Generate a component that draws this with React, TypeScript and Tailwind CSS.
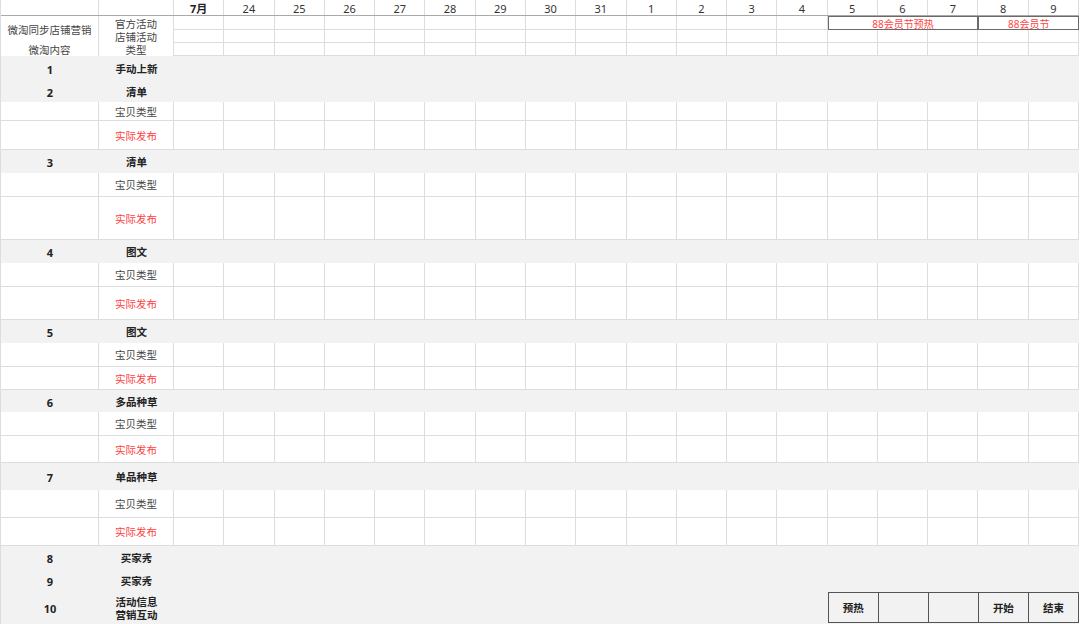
import React from 'react';

const dates = ['7月', '24', '25', '26', '27', '28', '29', '30', '31', '1', '2', '3', '4', '5', '6', '7', '8', '9'];

type Row = { kind: 'gray' | 'white'; h: string; num?: string; label?: string; red?: boolean };

const rows: Row[] = [
  { kind: 'gray', h: 'h-[24px]', num: '1', label: '手动上新' },
  { kind: 'gray', h: 'h-[22px]', num: '2', label: '清单' },
  { kind: 'white', h: 'h-[19px]', label: '宝贝类型' },
  { kind: 'white', h: 'h-[29px]', label: '实际发布', red: true },
  { kind: 'gray', h: 'h-[23px]', num: '3', label: '清单' },
  { kind: 'white', h: 'h-[24px]', label: '宝贝类型' },
  { kind: 'white', h: 'h-[43px]', label: '实际发布', red: true },
  { kind: 'gray', h: 'h-[23px]', num: '4', label: '图文' },
  { kind: 'white', h: 'h-[24px]', label: '宝贝类型' },
  { kind: 'white', h: 'h-[33px]', label: '实际发布', red: true },
  { kind: 'gray', h: 'h-[23px]', num: '5', label: '图文' },
  { kind: 'white', h: 'h-[24px]', label: '宝贝类型' },
  { kind: 'white', h: 'h-[23px]', label: '实际发布', red: true },
  { kind: 'gray', h: 'h-[22px]', num: '6', label: '多品种草' },
  { kind: 'white', h: 'h-[24px]', label: '宝贝类型' },
  { kind: 'white', h: 'h-[27px]', label: '实际发布', red: true },
  { kind: 'gray', h: 'h-[27px]', num: '7', label: '单品种草' },
  { kind: 'white', h: 'h-[28px]', label: '宝贝类型' },
  { kind: 'white', h: 'h-[28px]', label: '实际发布', red: true },
  { kind: 'gray', h: 'h-[23px]', num: '8', label: '买家秀' },
  { kind: 'gray', h: 'h-[23px]', num: '9', label: '买家秀' },
];

const cols = 'grid grid-cols-[98px_75px_repeat(18,minmax(0,1fr))]';
const line = 'border-[#dddddd]';
const center = 'flex items-center justify-center';

function EmptyCells({ count }: { count: number }) {
  return (
    <>
      {Array.from({ length: count }).map((_, i) => (
        <div key={i} className={`border-r border-b ${line}`} />
      ))}
    </>
  );
}

export default function App() {
  return (
    <div className="w-[1080px] h-[624px] bg-white overflow-hidden font-['Noto_Sans','Noto_Sans_CJK_SC',sans-serif] text-[#333] leading-none">
      <div className={`w-[1079px] border-l ${line}`}>
        {/* date header */}
        <div className={`${cols} h-[16px] border-b border-[#a9a9a9]`}>
          <div className={`border-r ${line}`} />
          <div className={`border-r ${line}`} />
          {dates.map((d, i) => (
            <div
              key={d + i}
              className={`border-r ${line} ${center} pt-px text-[11px] ${i === 0 ? 'font-bold text-[#222]' : 'text-[#333]'}`}
            >
              {d}
            </div>
          ))}
        </div>

        {/* activities */}
        <div className={`${cols} grid-rows-[14px_13px]`}>
          <div className={`row-span-2 border-r ${line} ${center} pt-px text-[10.5px] text-[#444]`}>微淘同步店铺营销</div>
          <div className={`border-r ${line} ${center} text-[10.5px] text-[#444] pt-[3px]`}>官方活动</div>
          <EmptyCells count={13} />
          <div className={`col-span-3 border border-[#6a6a6a] ${center} pt-px text-[10px] text-[#ff4545]`}>88会员节预热</div>
          <div className={`col-span-2 border border-[#6a6a6a] ${center} pt-px text-[10px] text-[#ff4545]`}>88会员节</div>
          <div className={`border-r ${line} ${center} pt-px text-[10.5px] text-[#444]`}>店铺活动</div>
          <EmptyCells count={18} />
        </div>

        <div className={`${cols} h-[13px]`}>
          <div className={`border-r ${line} ${center} pt-px text-[10.5px] text-[#444]`}>微淘内容</div>
          <div className={`border-r ${line} ${center} pt-px text-[10.5px] text-[#444]`}>类型</div>
          <EmptyCells count={18} />
        </div>

        {/* content rows */}
        {rows.map((r, i) =>
          r.kind === 'gray' ? (
            <div key={i} className={`${cols} ${r.h} bg-[#f2f2f2]`}>
              <div className={`${center} pt-[2px] text-[11px] font-bold text-[#222]`}>{r.num}</div>
              <div className={`${center} pt-[2px] text-[10.5px] font-bold text-[#222]`}>{r.label}</div>
              <div className="col-span-18" />
            </div>
          ) : (
            <div key={i} className={`${cols} ${r.h}`}>
              <div className={`border-r border-b ${line}`} />
              <div
                className={`border-r border-b ${line} ${center} pt-[2px] text-[10.5px] ${r.red ? 'text-[#ff4040]' : 'text-[#444]'}`}
              >
                {r.label}
              </div>
              <EmptyCells count={18} />
            </div>
          )
        )}

        {/* last row with legend */}
        <div className={`${cols} h-[32px] bg-[#f2f2f2]`}>
          <div className={`${center} pt-px text-[11px] font-bold text-[#222]`}>10</div>
          <div className="flex flex-col items-center justify-center gap-[3px] pt-px text-[10.5px] font-bold text-[#222]">
            <span>活动信息</span>
            <span>营销互动</span>
          </div>
          <div className="col-span-13" />
          <div className="col-span-5 h-[31px] flex border border-[#555]">
            {['预热', '', '', '开始', '结束'].map((t, i) => (
              <div
                key={i}
                className={`flex-1 ${center} pt-px text-[10.5px] font-bold text-[#222] ${i < 4 ? 'border-r border-[#555]' : ''}`}
              >
                {t}
              </div>
            ))}
          </div>
        </div>
      </div>
    </div>
  );
}
